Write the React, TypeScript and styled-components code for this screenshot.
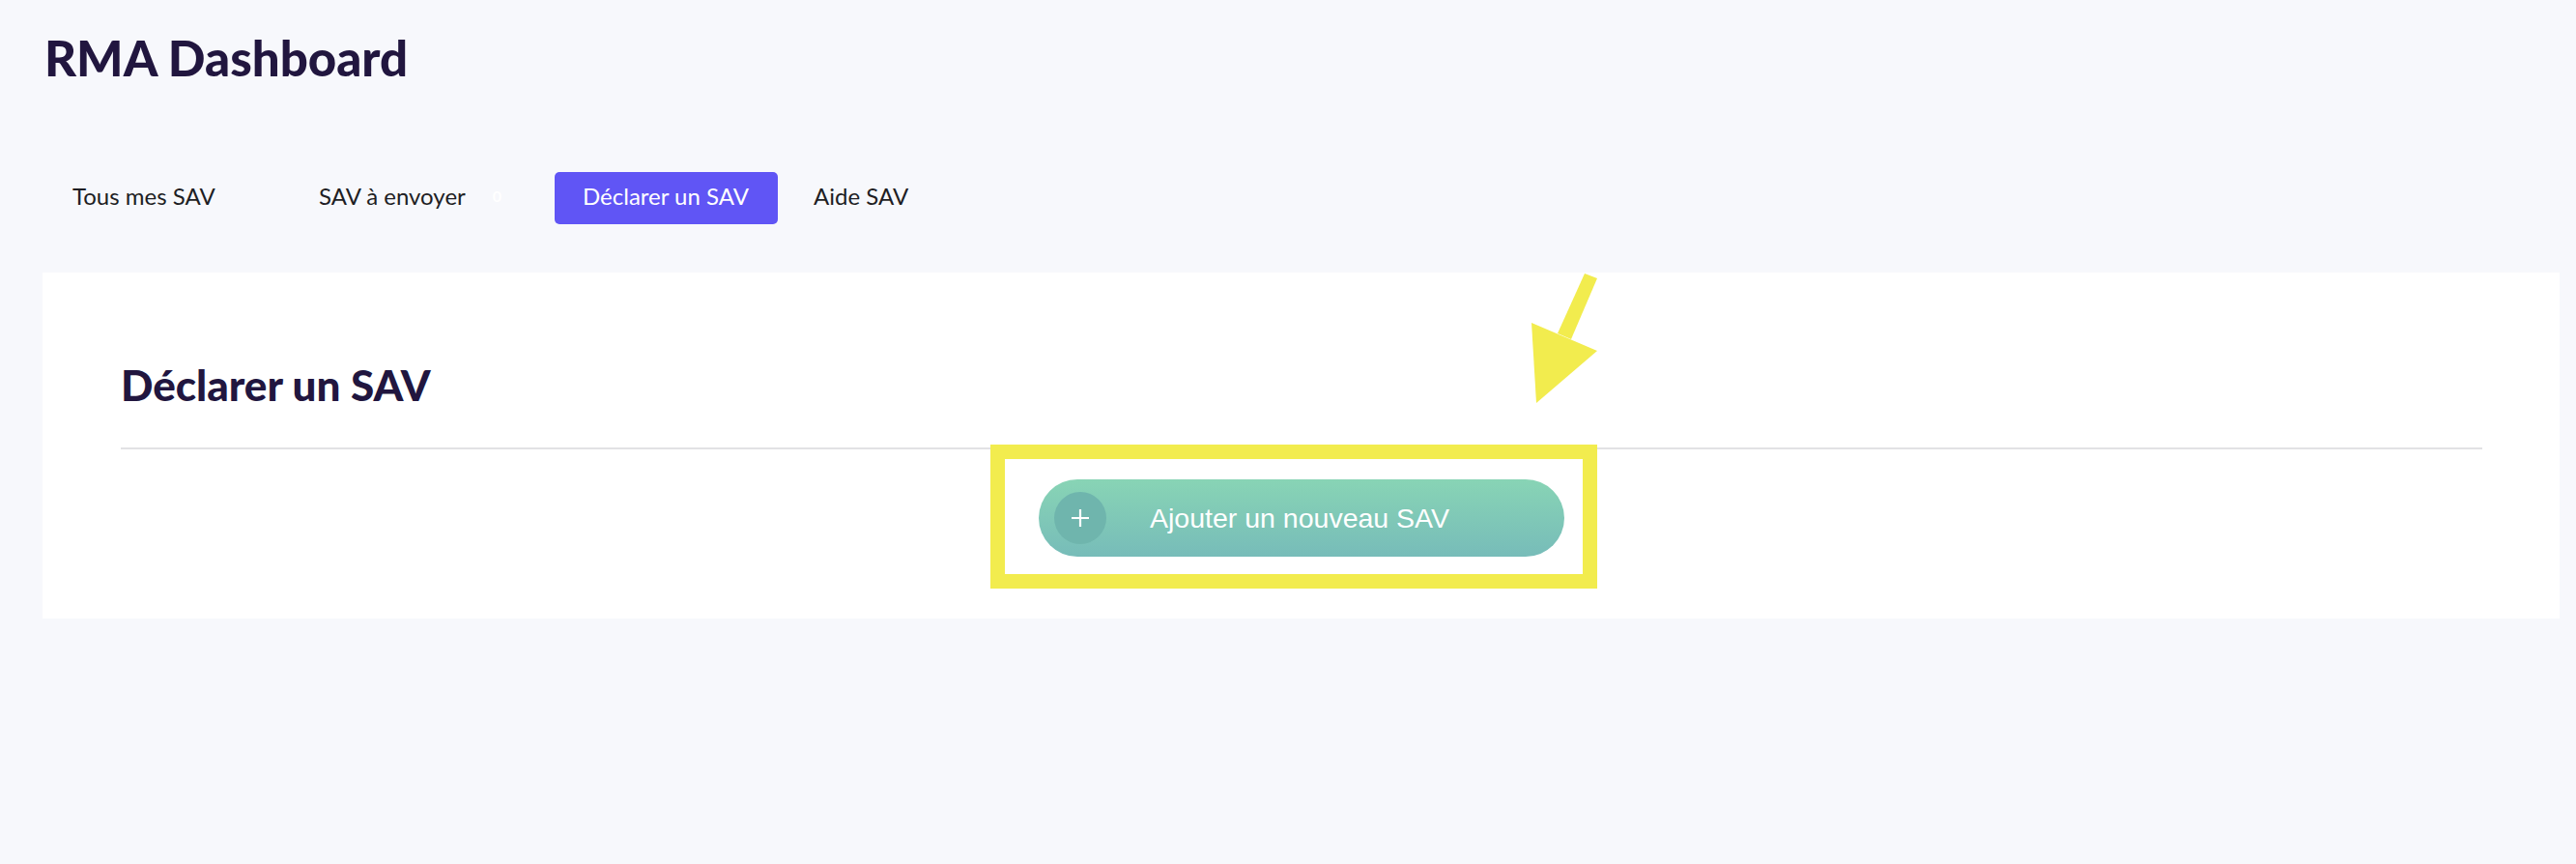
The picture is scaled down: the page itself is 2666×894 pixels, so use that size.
import styled, { createGlobalStyle } from 'styled-components';

const GlobalStyle = createGlobalStyle`
  html, body {
    margin: 0;
    padding: 0;
    background: #f7f8fc;
  }
  body {
    font-family: Lato, "Open Sans", sans-serif;
    color: #21163f;
  }
`

interface TabItem {
  label: string;
  width?: number;
  badge?: string;
  active?: boolean;
}

const tabs: TabItem[] = [
  { label: 'Tous mes SAV', width: 247 },
  { label: 'SAV à envoyer', width: 265, badge: '0' },
  { label: 'Déclarer un SAV', width: 231, active: true },
  { label: 'Aide SAV' },
]

export default function App() {
  return (
    <>
      <GlobalStyle />
      <Page>
        <PageTitle>RMA Dashboard</PageTitle>
        <TabBar>
          {tabs.map((tab) => (
            <Tab key={tab.label} $width={tab.width} $active={tab.active}>
              {tab.label}
              {tab.badge && <TabBadge>{tab.badge}</TabBadge>}
            </Tab>
          ))}
        </TabBar>
        <Card>
          <CardTitle>Déclarer un SAV</CardTitle>
          <Divider />
          <ActionRow>
            <Highlight>
              <AddButton>
                <PlusCircle>
                  <svg width="20" height="20" viewBox="0 0 20 20">
                    <path d="M10 1v18M1 10h18" stroke="#fff" strokeWidth="2.2" />
                  </svg>
                </PlusCircle>
                <AddLabel>Ajouter un nouveau SAV</AddLabel>
              </AddButton>
              <HighlightFrame />
            </Highlight>
          </ActionRow>
          <Pointer width="115" height="140" viewBox="0 0 115 140">
            <polygon points="56,1 69,6 42,69 28,63" fill="#f2ec4e" />
            <polygon points="1,52 69,81 6,135" fill="#f2ec4e" />
          </Pointer>
        </Card>
      </Page>
    </>
  )
}

const Page = styled.div`
  padding: 29px 17px 120px 44px;
`
const PageTitle = styled.h1`
  margin: 0 0 0 2px;
  font-family: Lato, sans-serif;
  font-weight: 900;
  font-size: 51px;
  line-height: 61px;
  color: #21163f;
`
const TabBar = styled.nav`
  display: flex;
  align-items: center;
  gap: 8px;
  margin: 88px 0 0 2px;
`
const Tab = styled.div<{ $width?: number; $active?: boolean }>`
  display: flex;
  align-items: center;
  box-sizing: border-box;
  width: ${(p) => (p.$width ? `${p.$width}px` : 'auto')};
  height: 54px;
  padding: 0 29px 5px;
  border-radius: 5px;
  font-family: Lato, sans-serif;
  font-size: 24px;
  color: ${(p) => (p.$active ? '#ffffff' : '#1e1e24')};
  background: ${(p) => (p.$active ? '#6055f5' : 'transparent')};
`
const TabBadge = styled.span`
  margin-left: 28px;
  font-size: 16px;
  font-weight: 700;
  color: #ffffff;
`
const Card = styled.section`
  position: relative;
  margin-top: 50px;
  padding: 89px 80px 64px 81px;
  background: #ffffff;
`
const CardTitle = styled.h2`
  margin: 0;
  font-family: Lato, sans-serif;
  font-weight: 900;
  font-size: 44px;
  line-height: 54px;
  color: #21163f;
`
const Divider = styled.hr`
  margin: 38px 0 0;
  border: none;
  height: 2px;
  background: #e2e2e4;
`
const ActionRow = styled.div`
  display: flex;
  justify-content: center;
  margin-top: 31px;
`
const Highlight = styled.div`
  position: relative;
`
const HighlightFrame = styled.div`
  position: absolute;
  top: -36px;
  left: -50px;
  right: -34px;
  bottom: -33px;
  border: 15px solid #f2ec4e;
  pointer-events: none;
`
const AddButton = styled.button`
  display: flex;
  align-items: center;
  gap: 45px;
  box-sizing: border-box;
  width: 544px;
  height: 80px;
  padding: 0 0 0 16px;
  border: none;
  border-radius: 40px;
  background: linear-gradient(180deg, #88d4b5 0%, #77bcb9 100%);
  cursor: pointer;
`
const PlusCircle = styled.span`
  display: flex;
  align-items: center;
  justify-content: center;
  width: 54px;
  height: 54px;
  border-radius: 50%;
  background: #6fb5ad;
`
const AddLabel = styled.span`
  font-family: "Liberation Sans", Arial, sans-serif;
  font-size: 28.5px;
  color: #ffffff;
`
const Pointer = styled.svg`
  position: absolute;
  top: 0;
  left: 1540px;
`
